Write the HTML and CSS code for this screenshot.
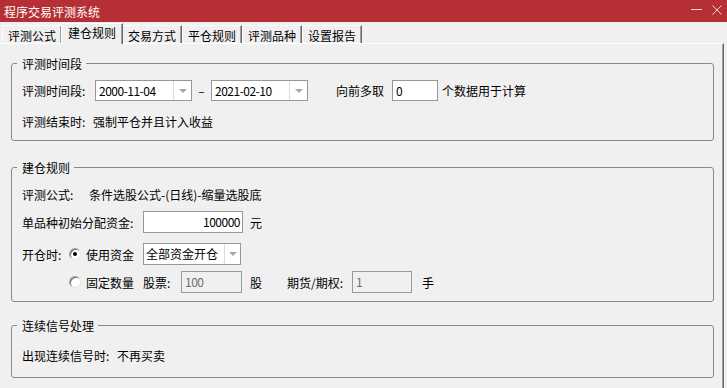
FILE: index.html
```html
<!DOCTYPE html>
<html lang="zh-CN">
<head>
<meta charset="utf-8">
<title>程序交易评测系统</title>
<link rel="stylesheet" href="styles.css">
</head>
<body>
<div class="window">
  <header class="titlebar">
    <span class="title">程序交易评测系统</span>
    <div class="winbtns">
      <svg class="wbtn" width="11" height="10" viewBox="0 0 11 10"><path d="M0 4.5H11" stroke="#f2d6d7" stroke-width="1"/></svg>
      <svg class="wbtn" width="10" height="10" viewBox="0 0 10 10"><path d="M0.5 0.5L9.5 9.5M9.5 0.5L0.5 9.5" stroke="#f2d6d7" stroke-width="1"/></svg>
    </div>
  </header>
  <nav class="tabs">
    <span class="tab">评测公式</span>
    <span class="tab active">建仓规则</span>
    <span class="tab">交易方式</span>
    <span class="tab">平仓规则</span>
    <span class="tab">评测品种</span>
    <span class="tab">设置报告</span>
  </nav>
  <main class="panel">
    <fieldset class="group g1">
      <legend>评测时间段</legend>
      <div class="row r1">
        <span class="lbl w73">评测时间段:</span>
        <div class="combo date"><span class="val num">2000-11-04</span><span class="drop"><i class="arrow"></i></span></div>
        <span class="dash">–</span>
        <div class="combo date"><span class="val num">2021-02-10</span><span class="drop"><i class="arrow"></i></span></div>
        <span class="ml28">向前多取</span>
        <span class="input w46 ml8 num">0</span>
        <span class="ml4">个数据用于计算</span>
      </div>
      <div class="row r2">
        <span class="lbl w71">评测结束时:</span>
        <span>强制平仓并且计入收益</span>
      </div>
    </fieldset>

    <fieldset class="group g2">
      <legend>建仓规则</legend>
      <div class="row r3">
        <span class="lbl w67">评测公式:</span>
        <span>条件选股公式-(日线)-缩量选股底</span>
      </div>
      <div class="row r4">
        <span class="lbl w121">单品种初始分配资金:</span>
        <span class="input w100 right num">100000</span>
        <span class="ml7">元</span>
      </div>
      <div class="row r5">
        <span class="lbl w46">开仓时:</span>
        <span class="radio on ml1"></span>
        <span class="ml5">使用资金</span>
        <div class="combo mode ml9"><span class="val">全部资金开仓</span><span class="drop"><i class="arrow"></i></span></div>
      </div>
      <div class="row r6">
        <span class="radio"></span>
        <span class="ml5">固定数量</span>
        <span class="lbl w38 ml9">股票:</span>
        <span class="input disabled w61 num">100</span>
        <span class="ml8">股</span>
        <span class="lbl w65 ml25">期货/期权:</span>
        <span class="input disabled w60 num">1</span>
        <span class="ml10">手</span>
      </div>
    </fieldset>

    <fieldset class="group g3">
      <legend>连续信号处理</legend>
      <div class="row r7">
        <span class="lbl w95">出现连续信号时:</span>
        <span>不再买卖</span>
      </div>
    </fieldset>
  </main>
</div>
</body>
</html>
```

FILE: styles.css
```css
* { box-sizing: border-box; }
html, body { margin: 0; padding: 0; }
body {
  width: 727px;
  height: 388px;
  overflow: hidden;
  background: #f0f0f0;
  font-family: "Noto Sans CJK SC", "Liberation Sans", sans-serif;
  font-size: 12px;
  line-height: 15px;
  color: #000;
}
.window { display: flex; flex-direction: column; height: 388px; }

/* title bar */
.titlebar {
  height: 22px;
  flex: none;
  background: #b52f35;
  color: #fff;
  display: flex;
  justify-content: space-between;
  align-items: center;
  padding: 0 5px 0 4px;
}
.title { line-height: 15px; }
.winbtns { display: flex; align-items: flex-start; gap: 10px; align-self: flex-start; padding-top: 5px; }
.wbtn { display: block; }

/* tabs */
.tabs {
  height: 21px;
  flex: none;
  display: flex;
  align-items: flex-end;
  padding-left: 2px;
}
.tab {
  height: 18px;
  padding: 2px 5px 0 5px;
  line-height: 15px;
  border-top: 1px solid #fff;
  border-left: 1px solid #fff;
  border-right: 1px solid #696969;
  box-shadow: inset -1px 0 0 #a0a0a0;
  background: #f0f0f0;
  white-space: nowrap;
}
.tab.active {
  height: 21px;
  margin: 0 -1px -1px -1px;
  padding: 1px 6px 0 6px;
  position: relative;
  z-index: 2;
}

/* panel */
.panel {
  flex: 1;
  margin-right: 3px;
  border-top: 1px solid #fff;
  border-right: 1px solid #696969;
  box-shadow: inset -1px 0 0 #a0a0a0;
  padding: 12px 9px 0 11px;
}

/* group boxes */
.group {
  margin: 0;
  border: 1px solid #898989;
  border-radius: 3px;
  padding: 0 10px;
  min-width: 0;
}
.group legend {
  padding: 0 4px 0 5px;
  margin-left: -5px;
  line-height: 15px;
}
.g1 { padding-bottom: 8px; }
.g2 { margin-top: 19px; padding-bottom: 8px; }
.g3 { margin-top: 16px; padding-bottom: 12px; }

.row { display: flex; align-items: center; white-space: nowrap; }
.r1 { margin-top: 9px; height: 21px; }
.r2 { margin-top: 10px; height: 21px; }
.r3 { margin-top: 9px; height: 20px; }
.r4 { margin-top: 7px; height: 22px; }
.r5 { margin-top: 10px; height: 22px; }
.r6 { margin-top: 6px; height: 22px; padding-left: 47px; }
.r7 { margin-top: 12px; height: 20px; }

.lbl { flex: none; }
.w38 { width: 38px; }
.w46 { width: 46px; }
.w60 { width: 60px; }
.w61 { width: 61px; }
.w65 { width: 65px; }
.w67 { width: 67px; }
.w71 { width: 71px; }
.w73 { width: 73px; }
.w95 { width: 95px; }
.w100 { width: 100px; }
.w121 { width: 121px; }
.ml1 { margin-left: 1px; }
.ml4 { margin-left: 4px; }
.ml5 { margin-left: 5px; }
.ml7 { margin-left: 7px; }
.ml8 { margin-left: 8px; }
.ml9 { margin-left: 9px; }
.ml10 { margin-left: 10px; }
.ml25 { margin-left: 25px; }
.ml28 { margin-left: 28px; }

.num { letter-spacing: -0.5px; }

/* combo boxes */
.combo {
  display: flex;
  flex: none;
  background: #fff;
  border: 1px solid #979797;
}
.combo.date { width: 97px; height: 21px; }
.combo.mode { width: 98px; height: 22px; }
.combo .val { flex: 1; padding-left: 3px; line-height: 19px; }
.combo.mode .val { padding-left: 2px; line-height: 20px; }
.combo .drop {
  width: 18px;
  border-left: 1px solid #dcdcdc;
  display: flex;
  align-items: center;
  justify-content: center;
}
.combo.mode .drop { width: 16px; }
.arrow {
  display: block;
  width: 0;
  height: 0;
  border-left: 4px solid transparent;
  border-right: 4px solid transparent;
  border-top: 4px solid #a8a8a8;
}
.dash { width: 19px; text-align: center; flex: none; }

/* inputs */
.input {
  flex: none;
  height: 21px;
  background: #fff;
  border: 1px solid #979797;
  padding: 0 3px;
  line-height: 19px;
}
.r4 .input, .r6 .input { height: 22px; line-height: 20px; }
.input.right { text-align: right; padding-right: 2px; }
.input.disabled { background: #f0f0f0; border-color: #9a9a9a; color: #6d6d6d; }

/* radios */
.radio {
  flex: none;
  width: 12px;
  height: 12px;
  border-radius: 50%;
  background: #fff;
  border: 1px solid;
  border-color: #a0a0a0 #e6e6e6 #e6e6e6 #a0a0a0;
  box-shadow: inset 1px 1px 0 #6f6f6f;
  display: flex;
  align-items: center;
  justify-content: center;
}
.radio.on::after {
  content: "";
  width: 4px;
  height: 4px;
  border-radius: 50%;
  background: #000;
}
```
